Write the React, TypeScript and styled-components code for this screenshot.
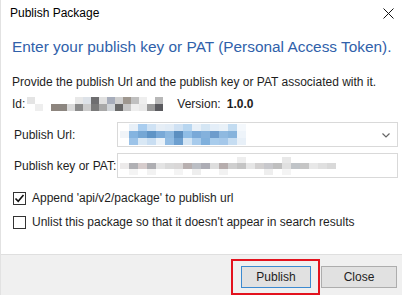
import styled, { createGlobalStyle } from 'styled-components'

const GlobalStyle = createGlobalStyle`
  html, body {
    margin: 0;
    padding: 0;
    background: #ffffff;
  }
  body {
    font-family: 'Liberation Sans', Arial, sans-serif;
    color: #1e1e1e;
  }
`

const Window = styled.div`
  box-sizing: border-box;
  width: 402px;
  height: 295px;
  display: flex;
  flex-direction: column;
  border-left: 1px solid #e2e2e2;
  background: #ffffff;
  font-size: 12px;
  overflow: hidden;
`

const TitleBar = styled.div`
  flex-shrink: 0;
  height: 26px;
  display: flex;
  align-items: center;
  justify-content: space-between;
  padding: 0 8px 0 9px;
`

const Title = styled.span`
  font-size: 12px;
  color: #000;
`

const Content = styled.div`
  flex: 1;
  display: flex;
  flex-direction: column;
  padding: 0 4px 0 11px;
`

const Heading = styled.div`
  margin-top: 12px;
  height: 18px;
  line-height: 18px;
  font-size: 15.4px;
  white-space: nowrap;
  color: #3061aa;
`

const TextLine = styled.div<{ top: number }>`
  margin-top: ${({ top }) => top}px;
  height: 16px;
  line-height: 16px;
  display: flex;
  align-items: center;
  white-space: nowrap;
`

const IdValue = styled.span`
  margin: 0 6px 0 2px;
`

const Version = styled.b`
  margin-left: 6px;
`

const FormRow = styled.div<{ top: number }>`
  margin-top: ${({ top }) => top}px;
  display: grid;
  grid-template-columns: 105px 1fr;
  align-items: center;
`

const Label = styled.span`
  padding-left: 2px;
`

const Field = styled.div`
  position: relative;
  box-sizing: border-box;
  height: 25px;
  border: 1px solid #d9d9d9;
  display: flex;
  align-items: center;
  padding-left: 2px;
  background: #fff;
`

const Chevron = styled.svg`
  position: absolute;
  right: 7px;
  top: 10px;
`

const CheckRow = styled.label<{ top: number }>`
  margin-top: ${({ top }) => top}px;
  display: flex;
  align-items: center;
  gap: 6px;
  padding-left: 1px;
  height: 16px;
  white-space: nowrap;
`

const Box = styled.span`
  box-sizing: border-box;
  width: 13px;
  height: 13px;
  border: 1px solid #333;
  background: #fff;
  display: flex;
  align-items: center;
  justify-content: center;
`

const Footer = styled.div`
  flex-shrink: 0;
  box-sizing: border-box;
  height: 41px;
  border-top: 1px solid #dfdfdf;
  background: #f0f0f0;
  display: flex;
  justify-content: flex-end;
  align-items: flex-start;
  gap: 10px;
  padding: 11px 5px 0 0;
`

const Highlight = styled.div`
  position: relative;
`

const RedBox = styled.div`
  position: absolute;
  left: -10px;
  top: -7px;
  right: -9px;
  bottom: -7px;
  border: 2.5px solid #e3121e;
  pointer-events: none;
`

const Button = styled.button<{ primary?: boolean; w: number }>`
  box-sizing: border-box;
  width: ${({ w }) => w}px;
  height: 22px;
  margin: 0;
  padding: 0;
  font-family: inherit;
  font-size: 12px;
  color: #1e1e1e;
  background: #e1e1e1;
  border: 1px solid ${({ primary }) => (primary ? '#3c8ad0' : '#adadad')};
`

const MosaicGrid = styled.div<{ cols: number; cell: number; rows: number }>`
  display: grid;
  grid-template-columns: repeat(${({ cols }) => cols}, ${({ cell }) => cell}px);
  grid-auto-rows: ${({ rows }) => rows}px;
  filter: blur(0.6px);
`

const MosaicCell = styled.span<{ c: string }>`
  background: ${({ c }) => c};
`

const Mosaic = ({ data, cell, rowH }: { data: string[][]; cell: number; rowH: number }) => (
  <MosaicGrid cols={data[0].length} cell={cell} rows={rowH}>
    {data.flat().map((c, i) => (
      <MosaicCell key={i} c={c} />
    ))}
  </MosaicGrid>
)

const W = '#ffffff'
const idMosaic = [
  ['#e4e4e4', W, W, W, W, W, '#e8e8e8', '#dde2e8', '#6e6e70', '#e0e0e0', '#a7adbb', '#cfcfcf', '#9e978f', '#c0c0c0', '#eeeeee', W, '#b8b8b8', W],
  [W, '#eeeeee', W, '#8d857e', '#8c8680', '#d9d9d9', '#8a8a8a', '#cccccc', '#7a7a7a', '#a8a8a8', '#d0d4d8', '#686868', '#c6c6c6', '#eeeeee', '#e8e8e8', '#9a9a9a', '#5a5a5e', W],
]
const urlMosaic = [
  [W, '#e8f0f8', '#a9cdef', '#cfe2f4', '#e6eef6', '#e2ecf6', '#cfe1f3', '#b8d6f0', '#e8f0f8', '#d5e6f4', '#e4eef8', '#e9f1f8', '#c3dcf1', '#f4f8fc', W, W],
  ['#f0f4f8', '#84b4e0', '#75a7d5', '#5f94c6', '#79a9d7', '#8cb8e0', '#5c8fc0', '#8fbde6', '#79a9d8', '#84b1dc', '#6e9ccc', '#8fb9e0', '#86b3dc', '#eef4fa', W, W],
  [W, '#9cc3e8', '#d9e8f5', '#c9def2', '#eaf2f9', '#92bce3', '#6d9fcf', '#d4e5f4', '#a7cbec', '#80b0dc', '#a8ccec', '#a5c8ea', '#c6ddf2', '#e8f0f8', W, W],
]
const keyMosaic = [
  [W, W, W, W, W, W, W, W, W, W, W, W, W, '#eeeeee', W, W, W, W, '#e8e8e8', W, W, W, W, W, W],
  ['#eceaea', '#b0b0b4', '#d6cccc', '#aeaeb2', '#e4e4e4', '#dadada', '#d9d7d7', '#b8b0b0', '#bbbec4', '#adadb5', '#dddddd', '#b6adad', '#cfcfcf', '#c4c4c4', '#e6e6e6', '#d2d0d0', '#c8c8cc', '#bfbfbf', '#e0e0e0', '#c0c4c8', '#c6c6c6', '#e8e8e8', '#e0e0e0', '#d9d9d9', W],
  [W, '#f4f4f4', W, '#f2f2f2', W, W, '#f4f4f4', W, '#eeeeee', W, W, '#f2f2f2', W, W, W, W, '#eeeeee', W, '#f4f4f4', W, W, W, W, W, W],
]

const CheckBox = ({ checked }: { checked?: boolean }) => (
  <Box>
    {checked && (
      <svg width="11" height="11" viewBox="0 0 11 11">
        <path d="M1.5 5.5 L4.2 8.3 L9.5 2" fill="none" stroke="#111" strokeWidth="1.6" />
      </svg>
    )}
  </Box>
)

export default function App() {
  return (
    <>
      <GlobalStyle />
      <Window>
        <TitleBar>
          <Title>Publish Package</Title>
          <svg width="11" height="11" viewBox="0 0 11 11">
            <path d="M0.5 0.5 L10.5 10.5 M10.5 0.5 L0.5 10.5" stroke="#111" strokeWidth="1" />
          </svg>
        </TitleBar>
        <Content>
          <Heading>Enter your publish key or PAT (Personal Access Token).</Heading>
          <TextLine top={18}>Provide the publish Url and the publish key or PAT associated with it.</TextLine>
          <TextLine top={6}>
            Id:
            <IdValue>
              <Mosaic data={idMosaic} cell={8} rowH={7} />
            </IdValue>
            Version:<Version>1.0.0</Version>
          </TextLine>
          <FormRow top={10}>
            <Label>Publish Url:</Label>
            <Field>
              <Mosaic data={urlMosaic} cell={9} rowH={7} />
              <Chevron width="8" height="5" viewBox="0 0 8 5">
                <path d="M0.5 0.5 L4 4 L7.5 0.5" fill="none" stroke="#666" strokeWidth="1.2" />
              </Chevron>
            </Field>
          </FormRow>
          <FormRow top={6}>
            <Label>Publish key or PAT:</Label>
            <Field>
              <Mosaic data={keyMosaic} cell={9} rowH={6} />
            </Field>
          </FormRow>
          <CheckRow top={12}>
            <CheckBox checked />
            Append 'api/v2/package' to publish url
          </CheckRow>
          <CheckRow top={8}>
            <CheckBox />
            Unlist this package so that it doesn't appear in search results
          </CheckRow>
        </Content>
        <Footer>
          <Highlight>
            <RedBox />
            <Button primary w={70}>Publish</Button>
          </Highlight>
          <Button w={76}>Close</Button>
        </Footer>
      </Window>
    </>
  )
}
